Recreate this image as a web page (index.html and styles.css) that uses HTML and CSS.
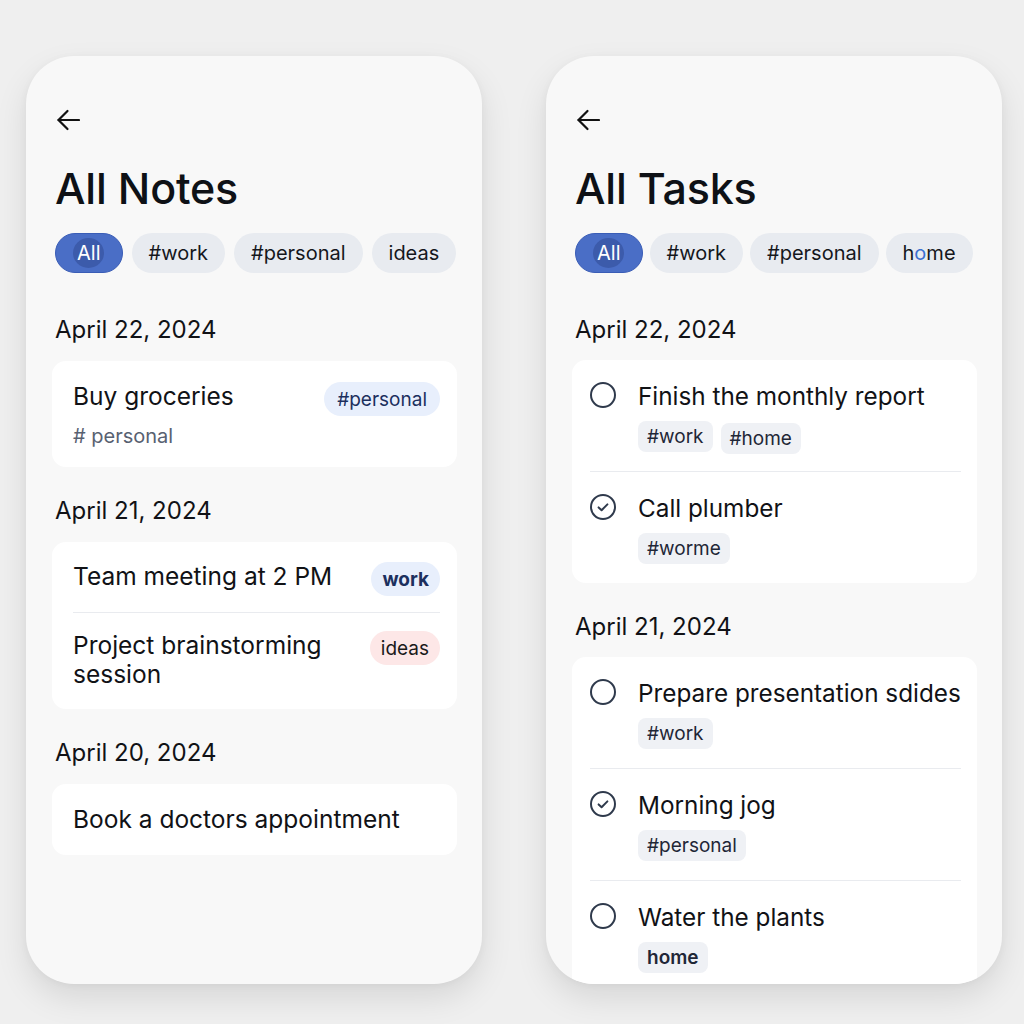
FILE: index.html
```html
<!DOCTYPE html>
<html lang="en">
<head>
<meta charset="utf-8">
<title>Notes and Tasks</title>
<link rel="stylesheet" href="styles.css">
</head>
<body>
<main class="screen">
  <section class="panel">
    <div class="panel-head">
      <button class="back" aria-label="Back">
        <svg width="24" height="24" viewBox="0 0 24 24" fill="none" stroke="#111" stroke-width="2.2" stroke-linecap="round" stroke-linejoin="round"><path d="M23 12H2.5"/><path d="M11.5 3L2.5 12L11.5 21"/></svg>
      </button>
      <h1 class="title">All Notes</h1>
      <div class="chips">
        <span class="chip chip-active"><span class="chip-label">All</span></span>
        <span class="chip">#work</span>
        <span class="chip">#personal</span>
        <span class="chip">ideas</span>
      </div>
    </div>

    <div class="group">
      <h2 class="date">April 22, 2024</h2>
      <div class="card">
        <div class="note note-single">
          <div class="note-main">
            <div class="note-title">Buy groceries</div>
            <div class="note-sub"># personal</div>
          </div>
          <span class="badge badge-blue">#personal</span>
        </div>
      </div>
    </div>

    <div class="group">
      <h2 class="date">April 21, 2024</h2>
      <div class="card card-list">
        <div class="note note-row">
          <div class="note-title">Team meeting at 2 PM</div>
          <span class="badge badge-blue badge-bold">work</span>
        </div>
        <div class="note note-row">
          <div class="note-title">Project brainstorming<br>session</div>
          <span class="badge badge-red">ideas</span>
        </div>
      </div>
    </div>

    <div class="group">
      <h2 class="date">April 20, 2024</h2>
      <div class="card card-list">
        <div class="note note-plain">
          <div class="note-title">Book a doctors appointment</div>
        </div>
      </div>
    </div>
  </section>

  <section class="panel panel-tasks">
    <div class="panel-head">
      <button class="back" aria-label="Back">
        <svg width="24" height="24" viewBox="0 0 24 24" fill="none" stroke="#111" stroke-width="2.2" stroke-linecap="round" stroke-linejoin="round"><path d="M23 12H2.5"/><path d="M11.5 3L2.5 12L11.5 21"/></svg>
      </button>
      <h1 class="title">All Tasks</h1>
      <div class="chips chips-tight">
        <span class="chip chip-active"><span class="chip-label">All</span></span>
        <span class="chip">#work</span>
        <span class="chip">#personal</span>
        <span class="chip">h<span class="odd-o">o</span>me</span>
      </div>
    </div>

    <div class="group">
      <h2 class="date">April 22, 2024</h2>
      <div class="card task-card">
        <div class="task">
          <svg class="check" width="26" height="26" viewBox="0 0 26 26" fill="none" stroke="#2f3a4c" stroke-width="2"><circle cx="13" cy="13" r="12"/></svg>
          <div class="task-body">
            <div class="task-title">Finish the monthly report</div>
            <div class="tags"><span class="tag">#work</span><span class="tag tag-low">#home</span></div>
          </div>
        </div>
        <div class="task">
          <svg class="check" width="26" height="26" viewBox="0 0 26 26" fill="none" stroke="#2f3a4c" stroke-width="2" stroke-linecap="round" stroke-linejoin="round"><circle cx="13" cy="13" r="12"/><path d="M8.6 13.4L11.6 16.2L17.4 10.4"/></svg>
          <div class="task-body">
            <div class="task-title">Call plumber</div>
            <div class="tags"><span class="tag">#worme</span></div>
          </div>
        </div>
      </div>
    </div>

    <div class="group">
      <h2 class="date">April 21, 2024</h2>
      <div class="card task-card">
        <div class="task">
          <svg class="check" width="26" height="26" viewBox="0 0 26 26" fill="none" stroke="#2f3a4c" stroke-width="2"><circle cx="13" cy="13" r="12"/></svg>
          <div class="task-body">
            <div class="task-title">Prepare presentation sdides</div>
            <div class="tags"><span class="tag">#work</span></div>
          </div>
        </div>
        <div class="task">
          <svg class="check" width="26" height="26" viewBox="0 0 26 26" fill="none" stroke="#2f3a4c" stroke-width="2" stroke-linecap="round" stroke-linejoin="round"><circle cx="13" cy="13" r="12"/><path d="M8.6 13.4L11.6 16.2L17.4 10.4"/></svg>
          <div class="task-body">
            <div class="task-title">Morning jog</div>
            <div class="tags"><span class="tag">#personal</span></div>
          </div>
        </div>
        <div class="task">
          <svg class="check" width="26" height="26" viewBox="0 0 26 26" fill="none" stroke="#2f3a4c" stroke-width="2"><circle cx="13" cy="13" r="12"/></svg>
          <div class="task-body">
            <div class="task-title">Water the plants</div>
            <div class="tags"><span class="tag tag-bold">home</span></div>
          </div>
        </div>
      </div>
    </div>
  </section>
</main>
</body>
</html>
```

FILE: styles.css
```css
* { box-sizing: border-box; }

html, body {
  margin: 0;
  background: #efefef;
}

body {
  font-family: Inter, "Noto Sans", "Liberation Sans", sans-serif;
  color: #111216;
}

.screen {
  display: flex;
  gap: 64px;
  padding: 56px 0 0 26px;
  height: 1024px;
  overflow: hidden;
}

.panel {
  width: 456px;
  height: 928px;
  flex: none;
  background: #f8f8f8;
  border-radius: 48px;
  padding: 52px 25px 0 26px;
  overflow: hidden;
  box-shadow: 0 14px 32px rgba(0, 0, 0, 0.10), 0 2px 8px rgba(0, 0, 0, 0.04);
}

.panel-head {
  padding-left: 3px;
}

.back {
  display: block;
  margin: 0 0 0 1px;
  padding: 0;
  border: 0;
  background: none;
  width: 24px;
  height: 24px;
}

.back svg { display: block; }

.title {
  margin: 31px 0 0;
  font-size: 43px;
  line-height: 50px;
  font-weight: 500;
  letter-spacing: -0.2px;
  color: #0e1116;
}

.chips {
  display: flex;
  gap: 9px;
  margin-top: 20px;
}

.chips-tight { gap: 7px; }

.chip {
  height: 40px;
  padding: 0 17px;
  border-radius: 20px;
  background: #e8ebf0;
  display: inline-flex;
  align-items: center;
  font-size: 20px;
  color: #15171c;
}

.chip-active {
  position: relative;
  padding: 0 21px;
  background: #4a6ec6;
  border: 1.5px solid #3a5db6;
  color: #fff;
}

.chip-label {
  position: relative;
  z-index: 0;
}

.chip-label::before {
  content: "";
  position: absolute;
  left: 50%;
  top: 50%;
  width: 31px;
  height: 30px;
  margin: -15px 0 0 -15.5px;
  border-radius: 50%;
  background: rgba(40, 62, 130, 0.4);
  z-index: -1;
}

.odd-o { color: #3d70cf; }

.group { margin-top: 30px; }
.panel-head + .group { margin-top: 43px; }

.date {
  margin: 0 0 17px;
  padding-left: 3px;
  font-size: 24px;
  line-height: 28px;
  font-weight: 400;
  color: #111216;
}

.panel-tasks .date { margin-bottom: 16px; }

.card {
  background: #ffffff;
  border-radius: 14px;
}

/* notes */
.note {
  display: flex;
  justify-content: space-between;
  align-items: flex-start;
}

.note-single {
  padding: 21px 17px 18px 21px;
}

.card-list {
  padding: 0 17px 0 21px;
}

.note-row {
  padding: 18px 0 20px;
}

.note-row:first-child {
  padding: 20px 0 16px;
  border-bottom: 1px solid #e9ebef;
}

.note-plain {
  padding: 21px 0 21px;
}

.note-title {
  font-size: 24.5px;
  line-height: 29px;
  color: #111216;
}

.note-sub {
  margin-top: 12px;
  font-size: 20px;
  line-height: 26px;
  color: #586171;
}

.badge {
  flex: none;
  height: 34px;
  padding: 0 11px;
  border-radius: 17px;
  display: inline-flex;
  align-items: center;
  font-size: 19px;
}

.badge-blue {
  background: #e8effc;
  color: #1c2f5e;
}

.note-single .badge { padding: 0 13px; }

.badge-bold { font-weight: 700; }

.badge-red {
  background: #fde7e7;
  color: #1a1a1a;
}

/* tasks */
.task-card {
  padding: 0 16px 0 18px;
}

.task {
  display: grid;
  grid-template-columns: 26px 1fr;
  column-gap: 22px;
  padding: 21px 0 19px;
  border-bottom: 1px solid #e9ebef;
}

.task:last-child { border-bottom: 0; }

.check {
  display: block;
  margin-top: 1px;
}

.task-title {
  font-size: 24.3px;
  line-height: 30px;
  color: #111216;
}

.tags {
  display: flex;
  gap: 8px;
  margin-top: 10px;
}

.tag {
  height: 31px;
  padding: 0 9px;
  border-radius: 8px;
  background: #eff1f5;
  display: inline-flex;
  align-items: center;
  font-size: 19px;
  color: #1f2737;
}

.tag-low { transform: translateY(2px); }

.tag-bold { font-weight: 600; }
```
